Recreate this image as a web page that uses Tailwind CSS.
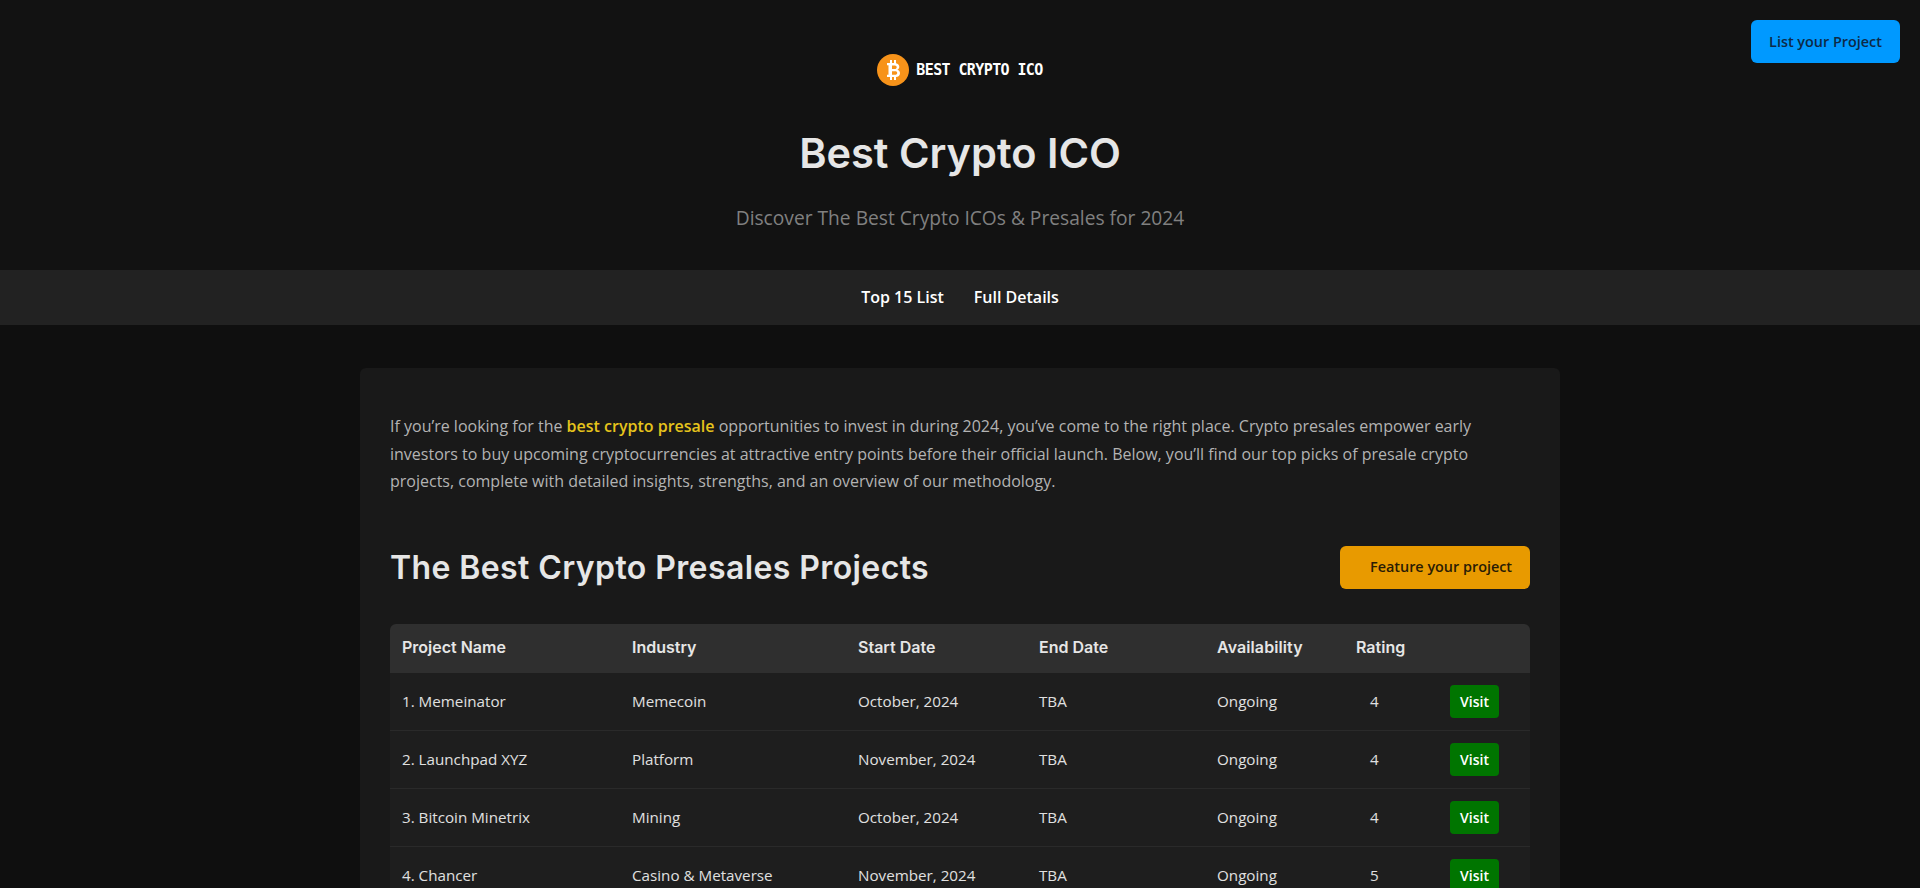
<!DOCTYPE html>
<html lang="en">
<head>
    <meta charset="UTF-8">
    <meta name="viewport" content="width=device-width, initial-scale=1.0">
    <title>Best Crypto ICO</title>
    <script src="https://cdn.jsdelivr.net/npm/@tailwindcss/browser@4"></script>
</head>
<body class="bg-[#0f0f0f] font-['Open_Sans',sans-serif] text-[#e0e0e0] h-screen overflow-hidden">
    <header class="relative h-[270px] bg-[#121212] flex flex-col items-center">
        <a href="#" class="absolute top-[20px] right-[20px] w-[149px] h-[43px] flex items-center justify-center rounded-md bg-[#0099ff] text-[#0d2a47] text-[14.4px] font-semibold">List your Project</a>
        <div class="flex items-center gap-[7px] mt-[54px] h-[32px]">
            <svg width="32" height="32" viewBox="0 0 32 32">
                <circle cx="16" cy="16" r="16" fill="#f7931a"/>
                <path fill="#fff" fill-rule="evenodd" d="M13 6h2v3h2V6h2v3.2c2 .4 3.3 1.8 3.3 3.6 0 1.4-.7 2.4-1.9 3 1.6.5 2.6 1.7 2.6 3.4 0 2.3-1.7 3.6-4 3.8V26h-2v-3h-2v3h-2v-3H10v-2.2h1.5V11.2H10V9h3V6zM15 11.5v3.6h2.8c1.1 0 1.9-.7 1.9-1.8s-.8-1.8-1.9-1.8H15zM15 17.3v3.5h3.2c1.2 0 2-.7 2-1.8s-.8-1.7-2-1.7H15z"/>
            </svg>
            <span class="mt-[1px] font-['DejaVu_Sans_Mono',monospace] font-bold text-[15px] leading-none text-white tracking-[-0.6px] whitespace-nowrap">BEST CRYPTO ICO</span>
        </div>
        <h1 class="mt-[37px] font-['Inter',sans-serif] font-semibold text-[41.5px] leading-[60px] text-[#e6e6e6]">Best Crypto ICO</h1>
        <p class="mt-[20px] text-[19.2px] leading-[30px] text-[#808080]">Discover The Best Crypto ICOs &amp; Presales for 2024</p>
    </header>
    <nav class="h-[55px] pb-[1px] bg-[#222222] flex items-center justify-center gap-[30px] text-[16px] font-semibold text-white">
        <a href="#">Top 15 List</a>
        <a href="#">Full Details</a>
    </nav>
    <main class="w-[1200px] mx-auto mt-[43px] bg-[#191919] rounded-md px-[30px] pt-[45px] pb-[30px]">
        <p class="text-[16px] leading-[27.5px] text-[#b3b3b3]">If you’re looking for the <a href="#" class="text-[#e6c41c] font-semibold">best crypto presale</a> opportunities to invest in during 2024, you’ve come to the right place. Crypto presales empower early investors to buy upcoming cryptocurrencies at attractive entry points before their official launch. Below, you’ll find our top picks of presale crypto projects, complete with detailed insights, strengths, and an overview of our methodology.</p>
        <div class="flex items-center justify-between mt-[50px] mb-[35px]">
            <h2 class="font-['Inter',sans-serif] font-semibold text-[32px] leading-[43px] tracking-[0.4px] text-[#e6e6e6]">The Best Crypto Presales Projects</h2>
            <a href="#" class="w-[190px] h-[43px] flex items-center pl-[30px] rounded-md bg-[#e89a00] text-[#2a1c05] text-[14.4px] font-semibold">Feature your project</a>
        </div>
        <table class="w-[1140px] table-fixed border-collapse text-[15.2px] text-[#e0e0e0]">
            <colgroup>
                <col class="w-[230px]"><col class="w-[226px]"><col class="w-[181px]"><col class="w-[178px]"><col class="w-[139px]"><col class="w-[186px]">
            </colgroup>
            <thead class="bg-[#2f2f2f] font-['Inter',sans-serif] text-[16px] text-left text-[#e6e6e6]">
                <tr class="h-[49px]">
                    <th class="pl-[12px] pb-[3px] font-semibold rounded-tl-md">Project Name</th>
                    <th class="pl-[12px] pb-[3px] font-semibold">Industry</th>
                    <th class="pl-[12px] pb-[3px] font-semibold">Start Date</th>
                    <th class="pl-[12px] pb-[3px] font-semibold">End Date</th>
                    <th class="pl-[12px] pb-[3px] font-semibold tracking-[0.1px]">Availability</th>
                    <th class="pl-[12px] pb-[3px] font-semibold rounded-tr-md">Rating</th>
                </tr>
            </thead>
            <tbody class="bg-[#1e1e1e]">
                <tr class="h-[58px] border-b border-[#2a2a2a]">
                    <td class="pl-[12px]">1. Memeinator</td><td class="pl-[12px]">Memecoin</td><td class="pl-[12px]">October, 2024</td><td class="pl-[12px]">TBA</td><td class="pl-[12px]">Ongoing</td>
                    <td><div class="flex items-center"><span class="pl-[26px] w-[106px]">4</span><a href="#" class="w-[49px] h-[33px] flex items-center justify-center rounded bg-[#007500] text-white font-semibold text-[14px]">Visit</a></div></td>
                </tr>
                <tr class="h-[58px] border-b border-[#2a2a2a]">
                    <td class="pl-[12px]">2. Launchpad XYZ</td><td class="pl-[12px]">Platform</td><td class="pl-[12px]">November, 2024</td><td class="pl-[12px]">TBA</td><td class="pl-[12px]">Ongoing</td>
                    <td><div class="flex items-center"><span class="pl-[26px] w-[106px]">4</span><a href="#" class="w-[49px] h-[33px] flex items-center justify-center rounded bg-[#007500] text-white font-semibold text-[14px]">Visit</a></div></td>
                </tr>
                <tr class="h-[58px] border-b border-[#2a2a2a]">
                    <td class="pl-[12px]">3. Bitcoin Minetrix</td><td class="pl-[12px]">Mining</td><td class="pl-[12px]">October, 2024</td><td class="pl-[12px]">TBA</td><td class="pl-[12px]">Ongoing</td>
                    <td><div class="flex items-center"><span class="pl-[26px] w-[106px]">4</span><a href="#" class="w-[49px] h-[33px] flex items-center justify-center rounded bg-[#007500] text-white font-semibold text-[14px]">Visit</a></div></td>
                </tr>
                <tr class="h-[58px] border-b border-[#2a2a2a]">
                    <td class="pl-[12px]">4. Chancer</td><td class="pl-[12px]">Casino &amp; Metaverse</td><td class="pl-[12px]">November, 2024</td><td class="pl-[12px]">TBA</td><td class="pl-[12px]">Ongoing</td>
                    <td><div class="flex items-center"><span class="pl-[26px] w-[106px]">5</span><a href="#" class="w-[49px] h-[33px] flex items-center justify-center rounded bg-[#007500] text-white font-semibold text-[14px]">Visit</a></div></td>
                </tr>
            </tbody>
        </table>
    </main>
</body>
</html>
